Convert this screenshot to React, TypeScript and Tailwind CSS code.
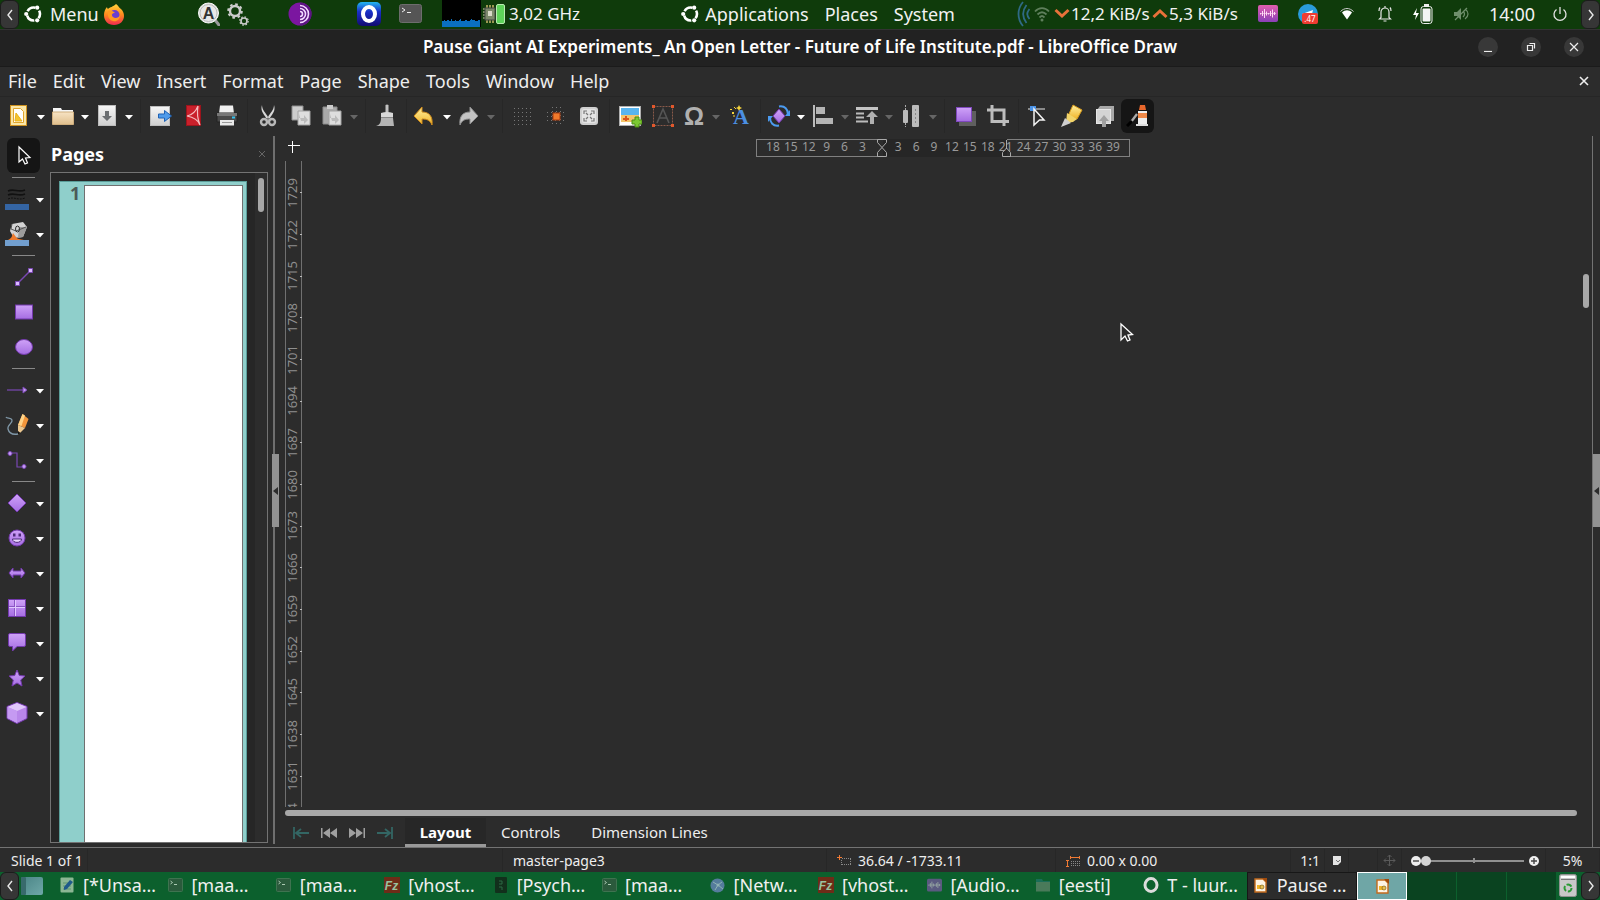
import type { ReactNode } from 'react';

type IconProps = { w?: number; h?: number; box?: string; className?: string; children?: ReactNode };

function Icon({ w = 24, h = 24, box, className = '', children }: IconProps) {
  return (
    <svg
      width={w}
      height={h}
      viewBox={box ?? `0 0 ${w} ${h}`}
      fill="none"
      className={`shrink-0 ${className}`}
      aria-hidden="true"
    >
      {children}
    </svg>
  );
}

function Defs() {
  return (
    <svg className="absolute w-0 h-0" aria-hidden="true">
      <defs>
        <linearGradient id="purple" x1="0" y1="0" x2="0" y2="1">
          <stop offset="0" stopColor="#cfa2f8" />
          <stop offset="1" stopColor="#a56de2" />
        </linearGradient>
        <linearGradient id="paper" x1="0" y1="0" x2="0" y2="1">
          <stop offset="0" stopColor="#f6f6f6" />
          <stop offset="1" stopColor="#cfcfcf" />
        </linearGradient>
        <linearGradient id="folder" x1="0" y1="0" x2="0" y2="1">
          <stop offset="0" stopColor="#f7e3c4" />
          <stop offset="1" stopColor="#e0bf8d" />
        </linearGradient>
        <linearGradient id="gold" x1="0" y1="0" x2="0" y2="1">
          <stop offset="0" stopColor="#fff0a0" />
          <stop offset="1" stopColor="#f0b429" />
        </linearGradient>
        <linearGradient id="flame" x1="0" y1="0" x2="0" y2="1">
          <stop offset="0" stopColor="#ffd43a" />
          <stop offset="0.5" stopColor="#ff8a1e" />
          <stop offset="1" stopColor="#f02a50" />
        </linearGradient>
        <linearGradient id="operaBg" x1="0" y1="0" x2="0" y2="1">
          <stop offset="0" stopColor="#22b8f0" />
          <stop offset="0.4" stopColor="#1a2fc8" />
          <stop offset="1" stopColor="#120a70" />
        </linearGradient>
        <linearGradient id="pink" x1="0" y1="0" x2="0" y2="1">
          <stop offset="0" stopColor="#e05fae" />
          <stop offset="1" stopColor="#8a40b8" />
        </linearGradient>
        <linearGradient id="desk" x1="0" y1="0" x2="1" y2="1">
          <stop offset="0" stopColor="#4a8486" />
          <stop offset="1" stopColor="#6fa8a8" />
        </linearGradient>
      </defs>
    </svg>
  );
}

/* ---------- top panel ---------- */

function UbuntuLogo() {
  return (
    <Icon w={20} h={20}>
      <circle cx="10.500" cy="10" r="6.500" stroke="#fff" strokeWidth="2.600" strokeDasharray="9 4.610" strokeDashoffset="4.500" />
      <circle cx="3.200" cy="10" r="2.100" fill="#fff" />
      <circle cx="14.200" cy="3.700" r="2.100" fill="#fff" />
      <circle cx="14.200" cy="16.300" r="2.100" fill="#fff" />
    </Icon>
  );
}

function Firefox() {
  return (
    <Icon w={22} h={22}>
      <path d="M13 1c3 2 3 4 5 5 2 2 3 4 3 7 0 5-4 9-10 9S1 18 1 12c0-3 1-6 3-8 0 1 1 2 1 2 2-2 5-2 8-5z" fill="url(#flame)" />
      <circle cx="11.5" cy="12" r="5" fill="#6a3fd0" />
      <path d="M5 8c3-1 5 0 7 2-3 0-4 2-2 4 2 2 6 1 7-2 0 5-4 7-7 6-4-1-6-5-5-10z" fill="#ff9a22" />
    </Icon>
  );
}

function SearchA() {
  return (
    <Icon w={22} h={24}>
      <path d="m17 18 4 5" stroke="#999" strokeWidth="3" strokeLinecap="round" />
      <circle cx="10.5" cy="11" r="10" fill="#e8e8e8" stroke="#f8f8f8" />
      <circle cx="10.5" cy="11" r="8.5" stroke="#bbb" />
      <text x="10.5" y="17" textAnchor="middle" fontSize="16" fontWeight="700" fill="#333" fontFamily="Liberation Sans, sans-serif">A</text>
    </Icon>
  );
}

function Gears() {
  return (
    <Icon w={22} h={24}>
      <circle cx="8" cy="9" r="5" stroke="#ccc" strokeWidth="2.4" />
      <circle cx="8" cy="9" r="6.8" stroke="#ccc" strokeWidth="2" strokeDasharray="2.6 2.74" />
      <circle cx="17" cy="19" r="3" stroke="#ccc" strokeWidth="1.6" />
      <circle cx="17" cy="19" r="4.2" stroke="#ccc" strokeWidth="1.2" strokeDasharray="1.6 1.7" />
    </Icon>
  );
}

function TorIcon() {
  return (
    <Icon w={24} h={24}>
      <circle cx="12" cy="12" r="11.5" fill="#7b16a0" />
      <path d="M12 .5a11.500 11.500 0 0 1 0 23z" fill="#5c1483" />
      <path d="M12 3.500a8.500 8.500 0 0 1 0 17M12 6.500a5.500 5.500 0 0 1 0 11M12 9.500a2.500 2.500 0 0 1 0 5" stroke="#f2d8ff" strokeWidth="1.600" />
    </Icon>
  );
}

function OperaGx() {
  return (
    <Icon w={24} h={24}>
      <rect width="24" height="24" rx="5" fill="url(#operaBg)" />
      <ellipse cx="12" cy="12" rx="6" ry="7" stroke="#fff" strokeWidth="4" />
    </Icon>
  );
}

function TerminalIcon() {
  return (
    <Icon w={23} h={19}>
      <rect x=".5" y=".5" width="22" height="18" rx="2" fill="#555" stroke="#6d6d6d" />
      <path d="m3 4 3 2-3 2M8 8.500h4" stroke="#eee" />
    </Icon>
  );
}

function CpuGraph() {
  return (
    <svg width="39" height="27" viewBox="0 0 39 27" className="shrink-0 bg-black" aria-hidden="true">
      <path d="M0 27v-6h2v-1h1v1h2v-1h2v1h2v-2h1v2h3v-1h1v1h3v-1h1v-1h1v2h4v-1h2v1h3v-1h1v-1h1v1h3v1h3v-1h2v8z" fill="#0a6fc0" />
    </svg>
  );
}

function CpuChip() {
  return (
    <Icon w={23} h={20}>
      <path d="M1 5h12M1 8h12M1 11h12M1 14h12" stroke="#ddd6b0" strokeWidth="1.200" />
      <path d="M5 1v18M8 1v18M11 1v18" stroke="#d8c070" strokeWidth="1.400" />
      <rect x="3" y="4" width="10" height="12" fill="#7d8a6c" stroke="#444" />
      <rect x="6" y="7" width="4" height="5" fill="#d8d8c8" />
      <rect x="14.500" y=".500" width="8" height="19" rx="1.500" fill="#5ed35a" stroke="#b8ecb0" />
    </Icon>
  );
}

function AudioIcon({ w = 20, dim = false }: { w?: number; dim?: boolean }) {
  return (
    <Icon w={w} h={w === 20 ? 17 : 14} box="0 0 20 17">
      <rect width="20" height="17" rx="2" fill={dim ? '#5a5a80' : 'url(#pink)'} />
      <path
        d="M2.500 8v1.500M4.500 6v5M6.500 4v9M8.500 6.500v4M10.500 8v1.500M12.500 6v5M14.500 4.500v8M16.500 7v3"
        stroke={dim ? '#9fb0a8' : '#ffd8f4'}
      />
      <path d="M2 8.500h16" stroke={dim ? '#9fb0a8' : '#ffd8f4'} strokeWidth=".600" />
    </Icon>
  );
}

function PanelArrow({ dir }: { dir: 'left' | 'right' }) {
  return (
    <button
      aria-label={dir === 'left' ? 'Hide panel left' : 'Hide panel right'}
      className="shrink-0 self-stretch w-[19px] flex items-center justify-center rounded-md border border-[#1c1c1c] bg-[#363636]"
    >
      <Icon w={6} h={12}>
        <path d={dir === 'left' ? 'M5 1 1 6l4 5' : 'm1 1 4 5-4 5'} stroke="#e8e8e8" strokeWidth="1.400" />
      </Icon>
    </button>
  );
}

function TopPanel() {
  return (
    <header className="flex items-center h-[29px] shrink-0 bg-[#0f3b0b] text-[#f2f2f2] text-lg leading-6 whitespace-nowrap">
      <PanelArrow dir="left" />
      <div className="flex items-center pl-1 pb-0.5">
        <button className="flex items-center w-[80px] gap-[7px]"><UbuntuLogo />Menu</button>
        <Firefox />
        <div className="flex items-center gap-[7px] ml-[73px]"><SearchA /><Gears /></div>
        <div className="ml-[39px]"><TorIcon /></div>
        <div className="ml-[45px]"><OperaGx /></div>
        <div className="ml-[18px] mr-5"><TerminalIcon /></div>
        <CpuGraph />
        <div className="ml-px"><CpuChip /></div>
        <span className="w-[72px] ml-1 text-[17px]">3,02 GHz</span>
      </div>
      <div className="grow-[8] basis-0" />
      <nav className="flex items-center gap-4 pb-0.5">
        <button className="flex items-center gap-[5px]"><UbuntuLogo />Applications</button>
        <button>Places</button>
        <button>System</button>
      </nav>
      <div className="grow-[5] basis-0" />
      <div className="flex items-center pb-0.5">
        <Icon w={13} h={26}>
          <path d="M6 1C0 8 0 18 6 25M9.500 4C5 10 5 16 9.500 22M12.500 8c-3 4-3 6 0 10" stroke="#2f6a86" strokeWidth="1.800" />
        </Icon>
        <Icon w={16} h={16} className="ml-1 mr-1">
          <path d="M1 5.500c4-4.500 10-4.500 14 0M3.500 8.500c3-3 6-3 9 0M5.500 11.500c2-2 3-2 5 0" stroke="#5f7f5c" strokeWidth="1.800" />
          <circle cx="8" cy="14" r="1.500" fill="#5f7f5c" />
        </Icon>
        <Icon w={16} h={11}><path d="m1.500 2 6.500 6 6.500-6" stroke="#e8713a" strokeWidth="3" /></Icon>
        <span className="w-[82px] pl-px text-[17px]">12,2 KiB/s</span>
        <Icon w={16} h={11}><path d="M1.500 9 8 3l6.500 6" stroke="#e8713a" strokeWidth="3" /></Icon>
        <span className="w-[71px] pl-px mr-[19px] text-[17px]">5,3 KiB/s</span>
        <AudioIcon />
        <Icon w={20} h={20} className="ml-5">
          <circle cx="10" cy="10" r="10" fill="#2a9bdb" />
          <path d="m4 10 11-4-2 8z" fill="#fff" />
          <rect x="4" y="9" width="16" height="11" rx="2" fill="#f03c32" />
          <text x="12" y="18" textAnchor="middle" fontSize="8" fill="#fff" fontFamily="Noto Sans, sans-serif">.47</text>
        </Icon>
        <Icon w={16} h={14} className="ml-[21px]">
          <path d="M1.500 4.500c4-4 9-4 13 0" stroke="#ccc" />
          <path d="M3 5.500c3-3 7-3 10 0l-5 7z" fill="#fff" />
        </Icon>
        <Icon w={14} h={18} className="ml-[23px]">
          <path d="M3 12.500V7a4 4 0 0 1 8 0v5.500l1.500 1.500h-11zM7 1v2M2 2.500C1 3.500 1 5 1 6M12 2.500c1 1 1 2.500 1 3.500M5.500 16h3" stroke="#e8e8e8" strokeWidth="1.200" />
        </Icon>
        <Icon w={20} h={20} className="ml-[21px]">
          <path d="M4 4 0 11h3l-1 5 4-7H3z" fill="#fff" />
          <rect x="8" y="2.500" width="11" height="17" rx="2.500" stroke="#eee" />
          <path d="M11 1h5" stroke="#eee" strokeWidth="2" />
          <rect x="9.500" y="4.500" width="8" height="13" rx="1" fill="#f4f4f4" />
        </Icon>
        <Icon w={16} h={16} className="ml-5 mr-[20px]">
          <path d="M1 6h3l4-4v12l-4-4H1z" fill="#6f8f6c" />
          <path d="M10 5c2 2 2 4 0 6M12 3c4 3 4 7 0 10M2 14 14 2" stroke="#6f8f6c" strokeWidth="1.200" />
        </Icon>
        <span className="w-[46px] mr-[17px]">14:00</span>
        <Icon w={16} h={16} className="mr-[13px]">
          <path d="M4.500 3.500a6 6 0 1 0 7 0M8 1v7" stroke="#e2e2e2" strokeWidth="1.300" />
        </Icon>
      </div>
      <PanelArrow dir="right" />
    </header>
  );
}

/* ---------- window chrome ---------- */

function TitleBar() {
  return (
    <div className="relative flex items-center justify-end h-[37px] shrink-0 border-t border-[#333] bg-[#222] pr-[11px] pb-0.5 gap-[13px]">
      <h1 className="absolute inset-x-0 text-center text-white text-[17px] leading-6 font-semibold pointer-events-none">
        Pause Giant AI Experiments_ An Open Letter - Future of Life Institute.pdf - LibreOffice Draw
      </h1>
      {[
        { label: 'Minimize', d: 'M1 9.500h8' },
        { label: 'Restore', d: 'M1.500 3.500h5v5h-5zM3.500 1.500h5v5' },
        { label: 'Close', d: 'm1 1 8 8M9 1 1 9' },
      ].map(b => (
        <button key={b.label} aria-label={b.label} className="w-5 h-5 mx-[5px] rounded-full bg-[#383838] flex items-center justify-center">
          <Icon w={10} h={10}><path d={b.d} stroke="#eee" strokeWidth="1.200" /></Icon>
        </button>
      ))}
    </div>
  );
}

const menus = ['File', 'Edit', 'View', 'Insert', 'Format', 'Page', 'Shape', 'Tools', 'Window', 'Help'];

function MenuBar() {
  return (
    <nav className="flex items-center h-[30px] shrink-0 border-t border-[#1b1b1b] pl-2 pr-[11px] pb-0.5 gap-4 text-lg leading-6 text-[#eee]">
      {menus.map(m => <button key={m}>{m}</button>)}
      <button aria-label="Close document" className="ml-auto">
        <Icon w={10} h={10}><path d="m1 1 8 8M9 1 1 9" stroke="#eee" strokeWidth="1.600" /></Icon>
      </button>
    </nav>
  );
}

function Caret({ dim = false }: { dim?: boolean }) {
  return <Icon w={8} h={5}><path d="M0 0h8L4 4.500z" fill={dim ? '#666' : '#fff'} /></Icon>;
}

type Tool = { label: string; icon: ReactNode; drop?: boolean; dim?: boolean; active?: boolean };

const fileTools: (Tool | null)[] = [
  {
    label: 'New', drop: true, icon: (
      <Icon>
        <rect x="3.500" y="1.500" width="16" height="20" fill="#fbe7a8" stroke="#cf9320" />
        <path d="M6.500 4.500h7l3 3v11h-10z" fill="#fff" stroke="#e0a52e" />
        <path d="m9 9 6 8H8z" fill="#f4c52e" stroke="#eab11c" />
      </Icon>
    ),
  },
  {
    label: 'Open', drop: true, icon: (
      <Icon>
        <path d="M2 4h8l1 2h11v4H2z" fill="#f5f5f5" />
        <path d="M1.500 8h21v12.500h-21z" fill="url(#folder)" stroke="#cfae7d" />
      </Icon>
    ),
  },
  {
    label: 'Save', drop: true, icon: (
      <Icon>
        <rect x="3.500" y="1.500" width="17" height="20" fill="url(#paper)" stroke="#bdbdbd" />
        <path d="M10 7h4v5h3l-5 5-5-5h3z" fill="#6c6f72" />
      </Icon>
    ),
  },
  null,
  {
    label: 'Export', icon: (
      <Icon>
        <rect x="1.500" y="2.500" width="19" height="19" fill="url(#paper)" stroke="#bdbdbd" />
        <path d="M9.500 10h6V6.500L22.500 12l-7 5.500V14h-6z" fill="#4f9bea" stroke="#1f62b5" />
      </Icon>
    ),
  },
  {
    label: 'Export as PDF', icon: (
      <Icon>
        <rect x="4.500" y="1.500" width="14" height="20" fill="#c9202b" stroke="#9c141c" />
        <path d="M16 2c-2 5-5 9-11 10 6 1 11 4 13 9M16 2c-1 6-1 12 2 19" stroke="#f5bcbf" strokeWidth="1.200" />
      </Icon>
    ),
  },
  {
    label: 'Print', icon: (
      <Icon>
        <path d="M5 1.500h13l1 8H4z" fill="#f0f0f0" />
        <path d="M2 9h20v9H2z" fill="#4a4a4a" stroke="#222" />
        <path d="M2 9h20v3H2z" fill="#777" />
        <path d="M5 16h14v5.500H5z" fill="#e9e9e9" />
        <path d="M7 18.500h10" stroke="#999" />
        <path d="M17 13.500h3" stroke="#35c3f0" strokeWidth="2" />
      </Icon>
    ),
  },
  null,
  {
    label: 'Cut', icon: (
      <Icon>
        <path d="M6 1c0 5 4 8 6 12l1 3-3-2C8 10 4 7 6 1zM18 1c0 5-4 8-6 12l-1 3 3-2c2-4 6-7 4-13z" fill="#d8d8d8" />
        <circle cx="8" cy="18" r="3" stroke="#b8b8b8" strokeWidth="2.400" />
        <circle cx="16" cy="18" r="3" stroke="#b8b8b8" strokeWidth="2.400" />
      </Icon>
    ),
  },
  {
    label: 'Copy', icon: (
      <Icon>
        <path d="M3 2h11v14H3z" fill="#cdcdcd" stroke="#8f8f8f" />
        <path d="M9 7h12v14H9z" fill="#dedede" stroke="#a2a2a2" />
        <path d="M10 10v4h5v-3l4 5-4 4v-3h-3" fill="#bbb" />
      </Icon>
    ),
  },
  {
    label: 'Paste', drop: true, dim: true, icon: (
      <Icon>
        <path d="M3 3h14v17H3z" fill="#a9a9a9" stroke="#8c8c8c" />
        <path d="M7 1h6v4H7z" fill="#ccc" />
        <path d="M9 7h12v14H9z" fill="#dedede" stroke="#a2a2a2" />
        <path d="M10 10v4h5v-3l4 5-4 4v-3h-3" fill="#bbb" />
      </Icon>
    ),
  },
  null,
  {
    label: 'Clone Formatting', icon: (
      <Icon>
        <path d="M11.500 1q1.500-1 3 0v8h-3z" fill="#c2c2c2" />
        <path d="M7 9q6-2 12 0v4H7z" fill="#d8d8d8" />
        <path d="M7 14h12l1 8H2c4-1 5-4 5-8z" fill="#b4b4b4" />
        <path d="M7 13.500h12" stroke="#888" />
      </Icon>
    ),
  },
  null,
  {
    label: 'Undo', drop: true, icon: (
      <Icon>
        <path d="M9 3v5c7 0 11 4 10 13-2-5-5-6-10-6v5l-8-8z" fill="url(#gold)" stroke="#d08c1c" />
      </Icon>
    ),
  },
  {
    label: 'Redo', drop: true, dim: true, icon: (
      <Icon>
        <path d="M13 3v5C6 8 2 12 3 21c2-5 5-6 10-6v5l8-8z" fill="#c4c4c4" stroke="#8e8e8e" />
      </Icon>
    ),
  },
  null,
  {
    label: 'Display Grid', icon: (
      <Icon>
        <path d="M3 4.500h18M3 8.500h18M3 12.500h18M3 16.500h18M3 20.500h18" stroke="#777" strokeDasharray="1 3" />
      </Icon>
    ),
  },
  {
    label: 'Helplines', icon: (
      <Icon>
        <path d="M3 8.500h18M3 12.500h18M3 16.500h18M8.500 3v18M12.500 3v18M16.500 3v18" stroke="#777" strokeDasharray="1 3" />
        <rect x="9" y="9" width="7" height="7" fill="#f07a2c" stroke="#a83a0c" />
      </Icon>
    ),
  },
  {
    label: 'Zoom', icon: (
      <Icon>
        <rect x="3" y="3" width="18" height="18" rx="3" fill="#cfcfcf" />
        <rect x="5" y="5" width="14" height="14" rx="2" fill="#e4e4e4" />
        <path d="M7 10V7h3M14 7h3v3M17 14v3h-3M10 17H7v-3M9 9l2 2M15 9l-2 2M9 15l2-2M15 15l-2-2" stroke="#777" strokeWidth="1.200" />
      </Icon>
    ),
  },
  null,
  {
    label: 'Image', icon: (
      <Icon>
        <rect x="1.500" y="2.500" width="21" height="19" fill="#fff" stroke="#b0b0b0" />
        <rect x="3" y="4" width="18" height="9" fill="#58b4ee" />
        <rect x="3" y="11" width="18" height="7" fill="#f4c56a" />
        <path d="M8 12v5M5 15h6" stroke="#d8541c" strokeWidth="2" />
        <path d="M17 13h4v3h3v4h-3v3h-4v-3h-3v-4h3z" fill="#7cc832" stroke="#4c8c14" />
      </Icon>
    ),
  },
  {
    label: 'Text Box', icon: (
      <Icon>
        <rect x="2.500" y="2.500" width="19" height="19" stroke="#8a5a4a" strokeDasharray="2 1" />
        <path d="M1 1h3v3H1zM20 1h3v3h-3zM1 20h3v3H1zM20 20h3v3h-3z" fill="#e2582c" />
        <path d="m6 19 6-14 6 14M8 14h8" stroke="#555" strokeWidth="1.600" />
      </Icon>
    ),
  },
  {
    label: 'Special Character', drop: true, dim: true, icon: (
      <Icon className="overflow-visible">
        <text x="12" y="21" textAnchor="middle" fontSize="25" fontWeight="700" fill="#b0b0b0" fontFamily="Liberation Sans, sans-serif">Ω</text>
      </Icon>
    ),
  },
  {
    label: 'Fontwork', icon: (
      <Icon className="overflow-visible">
        <text x="13" y="20" textAnchor="middle" fontSize="22" fontWeight="700" fill="#4b8fe2" fontFamily="Liberation Serif, serif">A</text>
        <path d="m11 1 1 2 2 1-2 1-1 2-1-2-2-1 2-1zM4 8h2v2H4zM7 4h1v1H7zM2 5h2v1H2z" fill="#f5d33c" />
        <path d="m6 3 1 1M5 12h2" stroke="#f5d33c" />
      </Icon>
    ),
  },
  null,
  {
    label: 'Transformations', drop: true, icon: (
      <Icon>
        <path d="m12 5 6 7-6 7-6-7z" fill="url(#purple)" stroke="#7339ad" />
        <path d="M12 2.500c6-1 9 3 9 8M12 21.500c-6 1-9-3-9-8" stroke="#4b9bf0" strokeWidth="2" />
        <path d="M23 6v6h-5zM1 18v-6h5z" fill="#4b9bf0" />
      </Icon>
    ),
  },
  {
    label: 'Align', drop: true, dim: true, icon: (
      <Icon>
        <path d="M2 1h2v22H2z" fill="#bbb" />
        <path d="M5 3h9v7H5zM5 14h17v6H5z" fill="#b4b4b4" />
      </Icon>
    ),
  },
  {
    label: 'Arrange', drop: true, dim: true, icon: (
      <Icon>
        <path d="M1 3h22v3H1z" fill="#c4c4c4" />
        <path d="M1 9.500h8M1 13.500h8M1 17.500h12" stroke="#bbb" strokeWidth="2" />
        <path d="M15 20v-7h-4l6-6 6 6h-4v7z" fill="#b0b0b0" />
      </Icon>
    ),
  },
  {
    label: 'Distribute', drop: true, dim: true, icon: (
      <Icon>
        <path d="M6.500 1v22M16.500 1v22" stroke="#aaa" strokeDasharray="2 1" />
        <rect x="4" y="6" width="5" height="13" rx="1" fill="#bbb" />
        <rect x="13" y="1" width="7" height="22" rx="1" fill="#bbb" />
        <path d="M16.500 5v14" stroke="#888" strokeDasharray="2 2" />
      </Icon>
    ),
  },
  null,
  {
    label: 'Shadow', icon: (
      <Icon>
        <path d="M6 7h17v15H6z" fill="#5f5f5f" />
        <rect x="3.500" y="3.500" width="15" height="14" fill="url(#purple)" stroke="#7f48bd" />
      </Icon>
    ),
  },
  {
    label: 'Crop', icon: (
      <Icon>
        <path d="M1 6h17v16M6 1v16.500h17" stroke="#bdbdbd" strokeWidth="3" />
      </Icon>
    ),
  },
  null,
  {
    label: 'Edit Points', icon: (
      <Icon>
        <path d="M1 5h17" stroke="#8a8a8a" strokeWidth="2" />
        <path d="M3 2h6v5H3z" fill="#4b93e6" />
        <path d="m7 5 10 11h-4.500L7 21z" fill="#2c2c2c" stroke="#f4f4f4" strokeWidth="1.500" />
      </Icon>
    ),
  },
  {
    label: 'Glue Points', icon: (
      <Icon>
        <path d="m13 1 9 5-5 9-9-3z" fill="url(#gold)" stroke="#d79b1c" />
        <path d="m7 9 10 6-4 3-7 1z" fill="#f2d469" />
        <path d="m5 14 6 5-10 4z" fill="#cfcfcf" />
      </Icon>
    ),
  },
  {
    label: 'Toggle Extrusion', icon: (
      <Icon>
        <path d="M7 2h14v15h-4V6H4z" fill="#a8a8a8" />
        <rect x="3.500" y="5.500" width="14" height="14" fill="#d4d4d4" stroke="#e6e6e6" />
        <path d="M9 23v-6H6l5-6 5 6h-3v6z" fill="#a0a0a0" />
      </Icon>
    ),
  },
  {
    label: 'Show Draw Functions', active: true, icon: (
      <Icon>
        <path d="m11 10-6 8" stroke="#aaa" strokeWidth="2.400" />
        <path d="m6 17-5 5" stroke="#000" strokeWidth="3" />
        <path d="M14 1h5l1 5h-7z" fill="#e8672c" />
        <path d="M12 7h9v13h-9z" fill="#eee" />
        <path d="M12 9h9v5h-9z" fill="#f08a4a" />
        <path d="M10 20h12v2H10z" fill="#ddd" />
      </Icon>
    ),
  },
];

function Toolbar() {
  return (
    <div role="toolbar" className="flex items-center h-10 shrink-0 border-t border-[#262626] pl-1 pb-0.5">
      {fileTools.map((t, i) =>
        t === null ? (
          <span key={i} className="w-2 h-[34px] flex justify-center"><i className="w-px bg-[#272727]" /></span>
        ) : t.drop ? (
          <span key={i} className="flex items-center">
            <button aria-label={t.label} className="w-[30px] h-[34px] flex items-center justify-center">{t.icon}</button>
            <button aria-label={`${t.label} menu`} className="w-[14px] h-[34px] pt-1 flex items-center justify-center"><Caret dim={t.dim} /></button>
          </span>
        ) : (
          <button
            key={i}
            aria-label={t.label}
            className={`w-[33px] h-[34px] rounded-md flex items-center justify-center ${t.active ? 'bg-[#151515]' : ''}`}
          >
            {t.icon}
          </button>
        )
      )}
    </div>
  );
}

/* ---------- drawing toolbar ---------- */

const P = 'url(#purple)';
const PS = '#7339ad';

const drawTools: (Tool | null)[] = [
  {
    label: 'Select', active: true, icon: (
      <Icon w={16} h={22}>
        <path d="M3 2v15l3.500-3 2.500 5 2.500-1-2-5 4.500-.500z" fill="#151515" stroke="#fff" strokeWidth="1.200" />
      </Icon>
    ),
  },
  null,
  {
    label: 'Line Color', drop: true, icon: (
      <Icon>
        <path d="M3 4c6-3 10 2 17-1M3 8c6-3 10 2 17-1" stroke="#111" strokeWidth="1.600" />
        <path d="M3 12c6-3 10 2 17-1" stroke="#111" strokeDasharray="2 1" />
        <path d="M0 17h24v6H0z" fill="#3465a4" />
      </Icon>
    ),
  },
  {
    label: 'Fill Color', drop: true, icon: (
      <Icon>
        <path d="m7 2 11-2 4 5-4 10-9 1-4-7z" fill="#d4d4d4" />
        <path d="m14 5 8 0-4 10-5 1z" fill="#9c9c9c" />
        <path d="m7 2-1 5 5 2 10-4" stroke="#555" />
        <ellipse cx="12.500" cy="7" rx="2" ry="3" stroke="#333" />
        <path d="M8 11c-1 3-1 5-5 7h16c-4-1-7-1-8-3z" fill="#ef7a2c" />
        <path d="M0 18h24v6H0z" fill="#729fcf" />
      </Icon>
    ),
  },
  null,
  {
    label: 'Insert Line', icon: (
      <Icon w={20} h={20}>
        <path d="M3 17 17 3" stroke="#7a48b4" strokeWidth="1.400" />
        <path d="M1.500 14.500h4v4h-4zM14.500 1.500h4v4h-4z" fill="#dcbcff" stroke="#7a48b4" />
      </Icon>
    ),
  },
  { label: 'Rectangle', icon: <Icon w={18} h={16}><rect x=".5" y="1" width="17" height="14" fill={P} stroke={PS} /></Icon> },
  { label: 'Ellipse', icon: <Icon w={18} h={16}><ellipse cx="9" cy="8" rx="8.500" ry="7.500" fill={P} stroke={PS} /></Icon> },
  null,
  {
    label: 'Lines and Arrows', drop: true, icon: (
      <Icon w={22} h={8}>
        <path d="M1 4h17" stroke="#7a48b4" strokeWidth="1.200" />
        <path d="m17 1 4 3-4 3z" fill="#c79bf5" stroke="#7a48b4" />
      </Icon>
    ),
  },
  {
    label: 'Curves and Polygons', drop: true, icon: (
      <Icon>
        <path d="M1 4c1 2 5 0 6 3s-5 5-4 9 4 6 10 5" stroke="#8098a8" strokeWidth="1.300" />
        <path d="m17.500 1 6 5-3.500 9-7-3z" fill="#f2963c" />
        <path d="m17.500 1 2.500 1.500L16.500 13l-3.500-1z" fill="#ffd489" />
        <path d="m13 12 7 3-7 7z" fill="#ecc890" />
        <path d="m13 18 2.500 2-2.500 2z" fill="#111" />
      </Icon>
    ),
  },
  {
    label: 'Connectors', drop: true, icon: (
      <Icon w={20} h={18}>
        <path d="M3 2h7v14h6" stroke="#7a48b4" strokeWidth="1.200" />
        <circle cx="3" cy="2.500" r="2" fill="#c79bf5" stroke="#7a48b4" />
        <circle cx="17" cy="15.500" r="2" fill="#c79bf5" stroke="#7a48b4" />
      </Icon>
    ),
  },
  null,
  { label: 'Basic Shapes', drop: true, icon: <Icon w={20} h={20}><path d="m10 1 9 9-9 9-9-9z" fill={P} stroke={PS} /></Icon> },
  {
    label: 'Symbol Shapes', drop: true, icon: (
      <Icon w={18} h={18}>
        <circle cx="9" cy="9" r="8" fill={P} stroke={PS} />
        <rect x="5" y="4.500" width="2.500" height="3" fill="#4d2a78" />
        <rect x="10.500" y="4.500" width="2.500" height="3" fill="#4d2a78" />
        <path d="M4.500 10h9c0 4.500-9 4.500-9 0z" fill="#e8d4ff" stroke="#4d2a78" />
      </Icon>
    ),
  },
  { label: 'Block Arrows', drop: true, icon: <Icon w={18} h={12}><path d="m1 6 4-5v3h8V1l4 5-4 5V8H5v3z" fill={P} stroke={PS} /></Icon> },
  {
    label: 'Flowchart', drop: true, icon: (
      <Icon w={18} h={18}>
        <rect x=".5" y=".5" width="17" height="17" fill={P} stroke={PS} />
        <path d="M6.500 1v16M1 7.500h16" stroke="#8a55c4" />
        <path d="M7.500 1v16M1 8.500h16" stroke="#e2c8ff" />
      </Icon>
    ),
  },
  {
    label: 'Callouts', drop: true, icon: (
      <Icon w={18} h={19}>
        <path d="M2 .5h14q1.500 0 1.500 1.500v10q0 1.500-1.500 1.500H9L4.500 18v-4.500H2Q.5 13.500.5 12V2Q.5.500 2 .500z" fill={P} stroke={PS} />
      </Icon>
    ),
  },
  {
    label: 'Stars and Banners', drop: true, icon: (
      <Icon w={18} h={18}>
        <path d="m9 1 2.300 5.500 5.700.500-4.300 4 1.300 6L9 14l-5 3 1.300-6L1 7l5.700-.500z" fill={P} stroke={PS} />
      </Icon>
    ),
  },
  {
    label: '3D Objects', drop: true, icon: (
      <Icon w={22} h={22}>
        <path d="m11 .5 10 4v12l-10 5-10-5v-12z" fill="#b886ea" stroke={PS} />
        <path d="m11 1 9.500 4L11 9 1.500 5z" fill="#e0c6fa" />
        <path d="m1.500 5 9.500 4v12l-9.500-5z" fill="#c59af2" />
      </Icon>
    ),
  },
];

function DrawBar() {
  return (
    <div role="toolbar" className="w-[50px] shrink-0 flex flex-col pt-0.5">
      {drawTools.map((t, i) =>
        t === null ? (
          <span key={i} className="h-2 flex items-center pl-3"><i className="w-[23px] h-px bg-[#888]" /></span>
        ) : t.drop ? (
          <span key={i} className="flex items-center h-[35px] pl-[5px]">
            <button aria-label={t.label} className="w-6 flex items-center justify-center">{t.icon}</button>
            <button aria-label={`${t.label} menu`} className="w-[21px] pt-1 flex items-center justify-center"><Caret /></button>
          </span>
        ) : (
          <button
            key={i}
            aria-label={t.label}
            className={`w-[33px] h-[35px] ml-[7px] rounded-md flex items-center justify-center ${t.active ? 'bg-[#151515]' : ''}`}
          >
            {t.icon}
          </button>
        )
      )}
    </div>
  );
}

function PagesPanel() {
  return (
    <aside className="w-[218px] shrink-0 flex flex-col pb-1">
      <div className="flex items-center justify-between h-9 pl-px pr-0.5">
        <h2 className="text-white text-lg leading-6 font-bold">Pages</h2>
        <button aria-label="Close pages panel">
          <Icon w={8} h={8}><path d="m1 1 6 6M7 1 1 7" stroke="#666" /></Icon>
        </button>
      </div>
      <div className="flex-1 min-h-0 flex border border-[#737373] bg-[#262626]">
        <div className="flex-1 flex pt-2 pl-2 pr-2">
          <div className="flex-1 flex pt-[3px] pr-[3px] bg-[#8fcfcb] border-t border-x border-[#5a9d99]">
            <span className="w-6 pl-2.5 text-lg leading-4 font-bold text-[#4c5a58]">1</span>
            <div className="flex-1 bg-white border-t border-x border-[#707070]" />
          </div>
        </div>
        <div className="w-3 bg-[#2c2c2c] pt-[5px] pl-[3px]"><div className="w-1.5 h-[34px] rounded-full bg-[#a8a8a8]" /></div>
      </div>
    </aside>
  );
}

function Grip() {
  return (
    <div className="absolute inset-x-0 top-0 bottom-0.5 flex items-center">
      <button aria-label="Toggle sidebar" className="w-[7px] h-[73px] bg-[#929292] flex items-center justify-center">
        <Icon w={5} h={8}><path d="M5 0v8L0 4z" fill="#2c2c2c" /></Icon>
      </button>
    </div>
  );
}

/* ---------- rulers ---------- */

const hMarks = ['18', '15', '12', '9', '6', '3', '', '3', '6', '9', '12', '15', '18', '21', '24', '27', '30', '33', '36', '39'];
const vMarks = Array.from({ length: 15 }, (_, i) => 1729 - i * 7);

function HRuler() {
  return (
    <div className="flex h-[25px] shrink-0">
      <div className="w-[17px] flex justify-center pt-[5px]">
        <Icon w={12} h={12}><path d="M4.500 0v12M0 4.500h12" stroke="#fff" /></Icon>
      </div>
      <div className="flex-1 flex justify-center pt-[3px] pr-2">
        <div className="relative w-[374px] h-[18px] border border-[#808080] px-[7px]">
          <div className="absolute -inset-y-px left-[126px] w-[124px] bg-[#262626]" />
          <div className="relative grid grid-cols-20 text-center text-xs leading-[14px] text-[#999]">
            {hMarks.map((m, i) => <span key={i} className="-mx-1">{m}</span>)}
          </div>
          <Icon w={12} h={20} className="absolute left-[119px] -top-0.5">
            <path d="M1.500 1.500h9v3l-4.500 5 4.500 5v4h-9v-4l4.500-5-4.500-5z" stroke="#aaa" />
          </Icon>
          <Icon w={11} h={20} className="absolute left-[244px] -top-0.5">
            <path d="M5.500 2v9M1.500 18.500v-4l4-4.500 4 4.500v4z" stroke="#aaa" />
          </Icon>
        </div>
      </div>
    </div>
  );
}

function VRuler() {
  return (
    <div className="w-[17px] shrink-0 flex flex-col border-x border-[#707070] pt-[11px] text-[13px] leading-[13px] text-[#8f8f8f]">
      {vMarks.map(m => (
        <div key={m} className="relative flex-1 flex items-center justify-center pr-0.5">
          <span className="[writing-mode:vertical-rl] rotate-180">{m}</span>
          <i className="absolute -right-px w-0.5 h-px bg-[#bbb]" />
        </div>
      ))}
      <div className="h-[10px] overflow-hidden flex items-start justify-center pt-1.5 pr-0.5">
        <span className="[writing-mode:vertical-rl] rotate-180">1624</span>
      </div>
    </div>
  );
}

function Editor() {
  return (
    <main className="flex-1 min-w-0 flex flex-col">
      <HRuler />
      <div className="flex-1 min-h-0 flex">
        <VRuler />
        <div className="relative flex-1">
          <Icon w={14} h={21} className="absolute left-[818px] top-[161px]">
            <path d="M1 2v16l4-4 2.500 5 2.500-1-2-5 4.500-.500z" fill="#2c2c2c" stroke="#fff" strokeWidth="1.300" />
          </Icon>
        </div>
        <div className="w-[9px] pt-[113px]"><div className="w-1.5 h-[34px] rounded-full bg-[#a8a8a8]" /></div>
      </div>
      <div className="h-1.5 mt-[3px] mr-[15px] shrink-0 rounded-full bg-[#a8a8a8]" />
      <div className="flex h-[31px] shrink-0 pt-0.5 text-[15px] leading-5 text-[#eee]">
        <div className="flex items-center w-[120px] pl-2 gap-3">
          <button aria-label="First layer"><Icon w={16} h={12}><path d="M1 0v12M3 6h13M8 2 3 6l5 4" stroke="#336664" strokeWidth="1.800" /></Icon></button>
          <button aria-label="Previous layer"><Icon w={16} h={10}><path d="M0 0h1.500v10H0zM9 0v10L2 5zM16 0v10L9 5z" fill="#a0a0a0" /></Icon></button>
          <button aria-label="Next layer"><Icon w={16} h={10}><path d="M14.500 0H16v10h-1.500zM7 0v10l7-5zM0 0v10l7-5z" fill="#a0a0a0" /></Icon></button>
          <button aria-label="Last layer"><Icon w={16} h={12}><path d="M15 0v12M0 6h13M8 2l5 4-5 4" stroke="#336664" strokeWidth="1.800" /></Icon></button>
        </div>
        <button className="w-[81px] pt-px bg-[#272727] border-b-[3px] border-[#999] font-bold text-white">Layout</button>
        <button className="px-[15px] pb-0.5">Controls</button>
        <button className="px-4 pb-0.5">Dimension Lines</button>
      </div>
    </main>
  );
}

/* ---------- status bar ---------- */

function StatusBar() {
  return (
    <footer className="flex items-stretch h-[25px] shrink-0 border-t border-[#737373] pt-px text-sm leading-6 text-[#eee] whitespace-nowrap [&>div]:border-r [&>div]:border-[#272727] [&>div]:flex [&>div]:items-center">
      <div className="w-[88px] pl-[11px]">Slide 1 of 1</div>
      <div className="grow-[414] basis-0" />
      <div className="grow-[313] basis-0 pl-2.5">master-page3</div>
      <div className="grow-[218] basis-0 pl-2.5 gap-[7px]">
        <Icon w={14} h={12}>
          <path d="M5 3.500h9M5 9.500h9M4.500 5v5M13.500 4v6" stroke="#888" strokeDasharray="1 1" />
          <path d="M2.500 0v5M0 2.500h5" stroke="#f07a34" />
        </Icon>
        36.64 / -1733.11
      </div>
      <div className="grow-[224] basis-0 pl-2.5 gap-[7px]">
        <Icon w={14} h={12}>
          <path d="M5 6.500h9M5 8.500h9M5 10.500h9" stroke="#888" strokeDasharray="1 1" />
          <path d="M4 2.500h10M4.500 1v3M13.500 1v3M1.500 5v6M0 5.500h3M0 11.500h3" stroke="#f07a34" />
        </Icon>
        0.00 x 0.00
      </div>
      <div className="w-[34px] justify-end pr-1">1:1</div>
      <div className="w-6 justify-center">
        <Icon w={10} h={10}><path d="M1 0h8v6L6 9H1z" fill="#e4e4e4" /><path d="m4 4 2 2 2-2" stroke="#777" /></Icon>
      </div>
      <div className="w-[29px]" />
      <div className="w-6 justify-center">
        <Icon w={13} h={13}><path d="M6.500 1v11M1 6.500h11M4.500 3l2-2 2 2M4.500 10l2 2 2-2M3 4.500l-2 2 2 2M10 4.500l2 2-2 2" stroke="#5a5a5a" /></Icon>
      </div>
      <div className="w-[144px] pl-[9px] pr-1.5">
        <button aria-label="Zoom out">
          <Icon w={10} h={10}><circle cx="5" cy="5" r="5" fill="#eee" /><path d="M2 5h6" stroke="#444" strokeWidth="1.400" /></Icon>
        </button>
        <span className="relative flex-1 flex items-center mr-[5px]">
          <input
            type="range"
            aria-label="Zoom level"
            defaultValue={0}
            className="w-full h-0.5 appearance-none bg-[#909090] [&::-webkit-slider-thumb]:appearance-none [&::-webkit-slider-thumb]:w-2.5 [&::-webkit-slider-thumb]:h-2.5 [&::-webkit-slider-thumb]:rounded-full [&::-webkit-slider-thumb]:bg-[#d4d4d4]"
          />
          <i className="absolute left-[52px] w-0.5 h-[5px] bg-[#909090]" />
        </span>
        <button aria-label="Zoom in">
          <Icon w={10} h={10}><circle cx="5" cy="5" r="5" fill="#eee" /><path d="M2 5h6M5 2v6" stroke="#444" strokeWidth="1.400" /></Icon>
        </button>
      </div>
      <div className="w-[54px] justify-center">5%</div>
    </footer>
  );
}

/* ---------- window list ---------- */

function FadedTerm() {
  return (
    <Icon w={15} h={14}>
      <rect x=".5" y=".5" width="14" height="13" rx="1" fill="#2b5a3c" stroke="#3f7350" />
      <path d="m2.500 3 2 1.500-2 1.500M6 6.500h3" stroke="#a9c8b0" />
    </Icon>
  );
}

function FileZilla() {
  return (
    <Icon w={16} h={16}>
      <rect width="16" height="16" fill="#6e2c18" />
      <text x="7.500" y="12.500" textAnchor="middle" fontSize="12" fontWeight="700" fontStyle="italic" fill="#9ac2a0" fontFamily="Liberation Sans, sans-serif">Fz</text>
    </Icon>
  );
}

function DrawDoc() {
  return (
    <Icon w={13} h={15}>
      <path d="M1 1h8l3 3v10H1z" fill="#fdf4e4" stroke="#c26a1c" strokeWidth="1.400" />
      <path d="M8 0h5v5z" fill="#a04a0c" />
      <path d="M3 7h4v4H3z" fill="#f0b429" />
      <circle cx="8" cy="9" r="2" fill="#e8c050" stroke="#6a5010" strokeWidth=".600" />
    </Icon>
  );
}

const tasks: { label: string; icon: ReactNode; active?: boolean }[] = [
  {
    label: '[*Unsa…', icon: (
      <Icon w={14} h={16}>
        <rect x=".5" y=".5" width="13" height="15" rx="1" fill="#8cb794" />
        <path d="M3 6h8M3 9h8M3 12h8" stroke="#5f9470" />
        <path d="m4 10 6-7 3 2-6 7-3 1z" fill="#1f5a8a" />
      </Icon>
    ),
  },
  { label: '[maa…', icon: <FadedTerm /> },
  { label: '[maa…', icon: <FadedTerm /> },
  { label: '[vhost…', icon: <FileZilla /> },
  {
    label: '[Psych…', icon: (
      <Icon w={16} h={16}>
        <rect x="2" width="12" height="16" rx="1" fill="#12301c" />
        <path d="M6 4h3v3H6M6 10h3v3" stroke="#2c6a44" />
      </Icon>
    ),
  },
  { label: '[maa…', icon: <FadedTerm /> },
  {
    label: '[Netw…', icon: (
      <Icon w={15} h={15}>
        <circle cx="7.500" cy="7.500" r="7" fill="#557c9c" />
        <path d="m3 4 5 3 4-3M8 7l-3 5M8 7l5 4" stroke="#8fb2b4" />
        <circle cx="8" cy="7" r="1.500" fill="#8fb2b4" />
      </Icon>
    ),
  },
  { label: '[vhost…', icon: <FileZilla /> },
  { label: '[Audio…', icon: <AudioIcon w={15} dim /> },
  {
    label: '[eesti]', icon: (
      <Icon w={16} h={14}>
        <path d="M1 1h6l1 2h7v10H1z" fill="#1b6e58" />
        <path d="M1 4h14v9.500H1z" fill="#4a7a5a" />
      </Icon>
    ),
  },
  { label: 'T - luur…', icon: <Icon w={16} h={16}><ellipse cx="8" cy="8" rx="6" ry="6.500" stroke="#dcdcdc" strokeWidth="3" /></Icon> },
  { label: 'Pause …', icon: <DrawDoc />, active: true },
];

function TaskBar() {
  return (
    <div className="flex h-7 shrink-0 bg-[#0c602d] text-lg leading-6 text-[#f0f0f0] whitespace-nowrap">
      <PanelArrow dir="left" />
      <button aria-label="Show desktop" className="w-[35px] pl-0.5 flex items-center">
        <Icon w={22} h={18}>
          <rect width="22" height="18" rx="2" fill="url(#desk)" />
          <rect width="5" height="18" rx="1" fill="#386a6c" />
        </Icon>
      </button>
      {tasks.map((t, i) => (
        <button
          key={i}
          className={`flex-1 min-w-0 flex items-center pl-[5px] pb-0.5 gap-2 ${t.active ? 'bg-[#2c2c2c] border border-[#171717]' : ''}`}
        >
          <span className="w-4 shrink-0 flex justify-center">{t.icon}</span>
          {t.label}
        </button>
      ))}
      <button aria-label="Workspace 1" className="w-[50px] flex items-center justify-center bg-[#6fa6a6] border border-white"><DrawDoc /></button>
      {[2, 3, 4].map(n => (
        <button key={n} aria-label={`Workspace ${n}`} className="w-[50px] bg-[#0a4320] border-r border-[#0c602d]" />
      ))}
      <button aria-label="Trash" className="w-6 pl-0.5 flex items-center">
        <Icon w={18} h={24}>
          <rect x=".5" y=".5" width="17" height="22" rx="2" fill="#c8c8c8" stroke="#909090" />
          <path d="M2 3h14" stroke="#fff" strokeWidth="2" />
          <path d="M2 5.500h14" stroke="#777" />
          <circle cx="9" cy="14" r="3.500" stroke="#2a9a34" strokeWidth="2" strokeDasharray="5.500 1.800" />
        </Icon>
      </button>
      <PanelArrow dir="right" />
    </div>
  );
}

export default function App() {
  return (
    <div className="h-screen flex flex-col overflow-hidden bg-[#2c2c2c] font-['Noto_Sans',sans-serif]">
      <Defs />
      <TopPanel />
      <TitleBar />
      <MenuBar />
      <Toolbar />
      <div className="flex-1 min-h-0 flex">
        <DrawBar />
        <PagesPanel />
        <div className="relative w-[13px] ml-1 shrink-0 pb-[3px]">
          <div className="w-0.5 h-full ml-px bg-[#6f6f6f]" />
          <Grip />
        </div>
        <Editor />
        <div className="relative w-2 shrink-0 border-l border-[#737373]"><Grip /></div>
      </div>
      <StatusBar />
      <TaskBar />
    </div>
  );
}
